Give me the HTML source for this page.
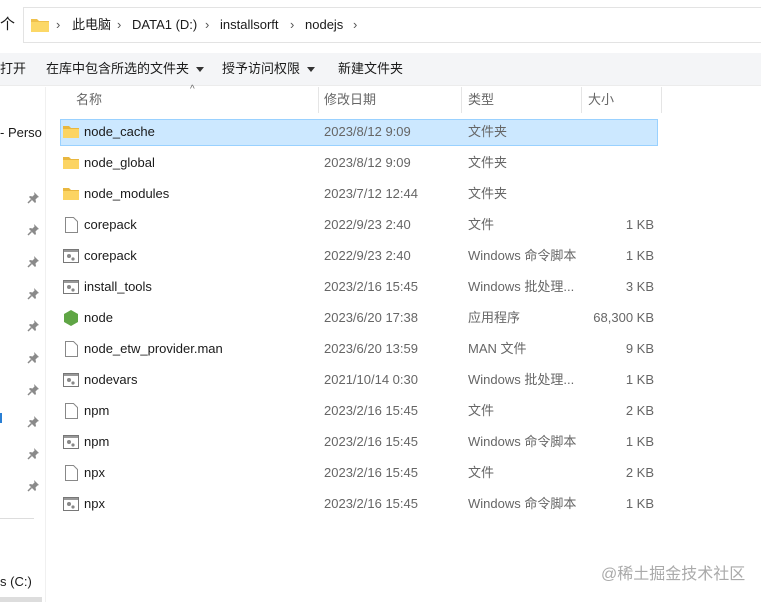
<!DOCTYPE html>
<html><head><meta charset="utf-8"><style>
*{margin:0;padding:0;box-sizing:border-box}
body{width:761px;height:602px;overflow:hidden;background:#fff;font-family:"Liberation Sans","Noto Sans CJK SC",sans-serif;font-size:13px;line-height:16px;color:#1a1a1a;position:relative}
.a{position:absolute;white-space:nowrap;line-height:16px}
.addr{left:23px;top:7px;width:750px;height:36px;border:1px solid #e3e3e3;border-right:none;background:#fff}
.tb{left:0;top:53px;width:761px;height:33px;background:#f4f5f7;border-bottom:1px solid #ececec}
.g{color:#666}
.sel{left:60px;top:119px;width:598px;height:27px;background:#cce8ff;border:1px solid #99d1ff}
.tri{display:inline-block;width:0;height:0;border-left:4px solid transparent;border-right:4px solid transparent;border-top:5px solid #333;vertical-align:middle;margin-left:7px}
.ch{color:#555}
</style></head><body>
<div class="a" style="left:0;top:17px;font-size:15px">个</div>
<div class="a addr"></div>
<svg class="a" style="left:31px;top:17px" width="18" height="15" viewBox="0 0 18 15"><path d="M0 2h6l2 2h10v11H0z" fill="#f0c14b"/><path d="M0 5h18v10H0z" fill="#fcd867"/></svg>
<div class="a ch" style="left:56px;top:17px">›</div>
<div class="a" style="left:72px;top:17px">此电脑</div>
<div class="a ch" style="left:117px;top:17px">›</div>
<div class="a" style="left:132px;top:17px">DATA1 (D:)</div>
<div class="a ch" style="left:205px;top:17px">›</div>
<div class="a" style="left:220px;top:17px">installsorft</div>
<div class="a ch" style="left:290px;top:17px">›</div>
<div class="a" style="left:305px;top:17px">nodejs</div>
<div class="a ch" style="left:353px;top:17px">›</div>
<div class="a tb"></div>
<div class="a" style="left:0;top:61px">打开</div>
<div class="a" style="left:46px;top:61px">在库中包含所选的文件夹<span class="tri"></span></div>
<div class="a" style="left:222px;top:61px">授予访问权限<span class="tri"></span></div>
<div class="a" style="left:338px;top:61px">新建文件夹</div>
<div class="a" style="left:45px;top:87px;width:1px;height:515px;background:#f0f0f0"></div>
<div class="a" style="left:0;top:125px">- Perso</div>
<div class="a" style="left:0;top:518px;width:34px;height:1px;background:#ddd"></div>
<div class="a" style="left:0;top:574px">s (C:)</div>
<div class="a" style="left:0;top:597px;width:42px;height:5px;background:#ddd"></div>
<div class="a" style="left:0;top:413px;width:2px;height:10px;background:#2a7fd4"></div>
<div class="a" style="left:190px;top:82px;font-size:10px;color:#666">^</div>
<div class="a g" style="left:76px;top:92px">名称</div>
<div class="a g" style="left:324px;top:92px">修改日期</div>
<div class="a g" style="left:468px;top:92px">类型</div>
<div class="a g" style="left:588px;top:92px">大小</div>
<div class="a" style="left:318px;top:87px;width:1px;height:26px;background:#e5e5e5"></div>
<div class="a" style="left:461px;top:87px;width:1px;height:26px;background:#e5e5e5"></div>
<div class="a" style="left:581px;top:87px;width:1px;height:26px;background:#e5e5e5"></div>
<div class="a" style="left:661px;top:87px;width:1px;height:26px;background:#e5e5e5"></div>
<div class="a sel"></div>
<div id="rows"></div>
<div class="a" style="left:601px;top:566px;font-size:16px;line-height:18px;color:#aaa">@稀土掘金技术社区</div>
<script>
var R=[["f","node_cache","2023/8/12 9:09","文件夹",""],["f","node_global","2023/8/12 9:09","文件夹",""],["f","node_modules","2023/7/12 12:44","文件夹",""],["d","corepack","2022/9/23 2:40","文件","1 KB"],["s","corepack","2022/9/23 2:40","Windows 命令脚本","1 KB"],["s","install_tools","2023/2/16 15:45","Windows 批处理...","3 KB"],["n","node","2023/6/20 17:38","应用程序","68,300 KB"],["d","node_etw_provider.man","2023/6/20 13:59","MAN 文件","9 KB"],["s","nodevars","2021/10/14 0:30","Windows 批处理...","1 KB"],["d","npm","2023/2/16 15:45","文件","2 KB"],["s","npm","2023/2/16 15:45","Windows 命令脚本","1 KB"],["d","npx","2023/2/16 15:45","文件","2 KB"],["s","npx","2023/2/16 15:45","Windows 命令脚本","1 KB"]];
var h="";
R.forEach(function(r,i){var c=132+31*i,t=c-8,ic="";
if(r[0]=="f")ic='<svg class="a" style="left:63px;top:'+(c-7)+'px" width="16" height="13"><path d="M0 1h6l2 2h8v10H0z" fill="#e9b73f"/><path d="M0 4h16v9H0z" fill="#fcd462"/></svg>';
else if(r[0]=="d")ic='<svg class="a" style="left:65px;top:'+(c-8)+'px" width="13" height="16"><path d="M.5 .5h8l4 4v11H.5z" fill="#fff" stroke="#888"/></svg>';
else if(r[0]=="s")ic='<svg class="a" style="left:63px;top:'+(c-7)+'px" width="16" height="14"><rect x=".5" y=".5" width="15" height="13" fill="#fff" stroke="#777"/><rect x="1" y="1" width="14" height="2" fill="#999"/><circle cx="6" cy="7" r="2" fill="#888"/><circle cx="10" cy="10" r="1.6" fill="#888"/></svg>';
else ic='<svg class="a" style="left:64px;top:'+(c-8)+'px" width="14" height="16"><path d="M7 0l7 4v8l-7 4-7-4V4z" fill="#5fa545"/></svg>';
h+=ic+'<div class="a" style="left:84px;top:'+t+'px">'+r[1]+'</div><div class="a g" style="left:324px;top:'+t+'px">'+r[2]+'</div><div class="a g" style="left:468px;top:'+t+'px">'+r[3]+'</div><div class="a g" style="right:107px;top:'+t+'px">'+r[4]+'</div>';});
[198,230,262,294,326,358,390,422,454,486].forEach(function(y){h+='<svg class="a" style="left:27px;top:'+(y-6)+'px" width="12" height="12" viewBox="0 0 12 12"><path d="M7 0l5 5-1.5.5-2 2 .5 2.5-1 1L2 5l1-1 2.5.5 2-2z" fill="#8a8a8a"/><path d="M4.5 7.5L1 11" stroke="#8a8a8a" stroke-width="1.5"/></svg>';});
document.getElementById("rows").innerHTML=h;
</script>
</body></html>
